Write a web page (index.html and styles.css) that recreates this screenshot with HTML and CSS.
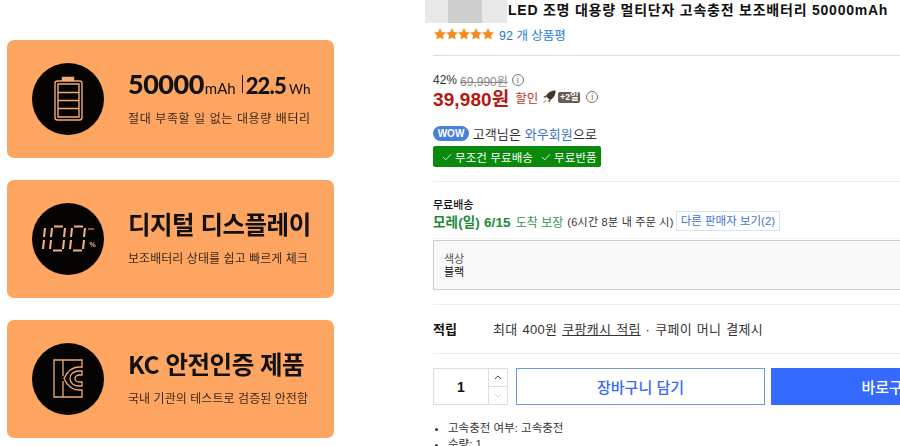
FILE: index.html
```html
<!DOCTYPE html>
<html lang="ko">
<head>
	<title>보조배터리</title>
	<meta charset="utf-8">
	<link rel="stylesheet" href="styles.css">
</head>
<body>

	<div class="page">

		<div class="features">

			<div class="card">
				<svg class="badge" viewBox="0 0 72 72">
					<circle cx="36" cy="36" r="36" fill="#050403"/>
					<g fill="none" stroke="#f0ac74" stroke-width="1.4">
						<path d="M30.500 18v-3.500h11V18" fill="#f0ac74"/>
						<rect x="23" y="18" width="27" height="39" rx="2.500"/>
						<path d="M26 21h21v33H26zM26 29.500h21M26 37.500h21M26 45.500h21"/>
					</g>
				</svg>
				<div class="card-text">
					<div class="headline headline-num">50000<small>mAh</small><span class="pipe"></span><span class="wh-num">22.5</span><small class="wh">Wh</small></div>
					<div class="sub sub-wide">절대 부족할 일 없는 대용량 배터리</div>
				</div>
			</div>

			<div class="card">
				<svg class="badge" viewBox="0 0 72 72">
					<circle cx="36" cy="36" r="36" fill="#050403"/>
					<g fill="none" stroke="#f3b07c" stroke-width="2.100">
						<path d="M13 25l-1 9M12 37l-1 9"/>
						<path d="M20 25l-1 9M19 37l-1 9M22 23.500h9M21 47.500h9M33 25l-1 9M32 37l-1 9"/>
						<path d="M40 25l-1 9M39 37l-1 9M42 23.500h9M41 47.500h9M53 25l-1 9M52 37l-1 9"/>
						<path d="M56 26h6" stroke-width="1"/>
					</g>
					<text class="percent" x="57.500" y="44">%</text>
				</svg>
				<div class="card-text">
					<div class="headline">디지털 디스플레이</div>
					<div class="sub">보조배터리 상태를 쉽고 빠르게 체크</div>
				</div>
			</div>

			<div class="card">
				<svg class="badge" viewBox="0 0 72 72">
					<circle cx="36" cy="36" r="36" fill="#050403"/>
					<g fill="none" stroke="#f0ac74" stroke-width="1.300">
						<path d="M22 17H50V24H47C40 24 35 29 32 35.500C35 42 40 47 47 47H50V54H22Z"/>
						<path d="M31 17V33M31 38V54"/>
						<path d="M50 28H47C42 28 38 31 38 35.500S42 43 47 43H50V39H47.500C45 39 43 37.500 43 35.500S45 32 47.500 32H50Z"/>
					</g>
				</svg>
				<div class="card-text">
					<div class="headline">KC 안전인증 제품</div>
					<div class="sub">국내 기관의 테스트로 검증된 안전함</div>
				</div>
			</div>

		</div>

		<div class="product">

			<div class="title-row">
				<div class="thumb"><span></span></div>
				<h1>LED 조명 대용량 멀티단자 고속충전 보조배터리 50000mAh</h1>
			</div>

			<div class="rating">
				<svg class="stars" viewBox="0 0 60 12">
					<defs>
						<path id="star" d="M6 0l1.800 3.900 4.200.5-3.100 2.900.8 4.200L6 9.400 2.300 11.500l.8-4.200L0 4.400l4.200-.5z"/>
					</defs>
					<use href="#star" fill="#f58a1f"/>
					<use href="#star" x="12" fill="#f58a1f"/>
					<use href="#star" x="24" fill="#f58a1f"/>
					<use href="#star" x="36" fill="#f58a1f"/>
					<use href="#star" x="48" fill="#f58a1f"/>
				</svg>
				<a class="reviews">92 개 상품평</a>
			</div>

			<div class="prices">
				<div class="price-old">
					42% <s>69,990원</s>
					<span class="info">i</span>
				</div>
				<div class="price-now">
					<strong>39,980원</strong>
					<span class="sale">할인</span>
					<svg class="rocket" viewBox="0 0 16 16">
						<path d="M15.500 .5c-5.500 0-9 2.500-11 6.500l4.500 4.500c4-2 6.500-5.500 6.500-11z" fill="#3d342c"/>
						<path d="M5 6L1.500 7.500l2.500 2zM10 11l-1.500 3.500-2-2.500z" fill="#6b5d50"/>
						<path d="M4 11L.5 15.500 5 13z" fill="#f09a30"/>
					</svg>
					<span class="plus">+2일</span>
					<span class="info">i</span>
				</div>
			</div>

			<div class="wow">
				<div class="wow-line"><span class="wow-pill">WOW</span> 고객님은 <a>와우회원</a>으로</div>
				<div class="free-tag">
					<svg class="check" viewBox="0 0 12 10"><path d="M1 5l3.500 3.500L11 1.500" fill="none" stroke="#fff" stroke-width="1"/></svg>
					<span>무조건 무료배송</span>
					<svg class="check" viewBox="0 0 12 10"><path d="M1 5l3.500 3.500L11 1.500" fill="none" stroke="#fff" stroke-width="1"/></svg>
					<span>무료반품</span>
				</div>
			</div>

			<div class="delivery">
				<div class="delivery-label">무료배송</div>
				<div class="delivery-line">
					<strong>모레(일) 6/15</strong>
					<span class="guarantee">도착 보장</span>
					<span class="until">(6시간 8분 내 주문 시)</span>
					<a class="sellers">다른 판매자 보기(2)</a>
				</div>
			</div>

			<div class="option">
				<div>색상</div>
				<div>블랙</div>
			</div>

			<div class="points">
				<strong>적립</strong>
				<span>최대 400원 <u>쿠팡캐시 적립</u> · 쿠페이 머니 결제시</span>
			</div>

			<div class="buy-row">
				<div class="qty">
					<div class="qty-value">1</div>
					<div class="qty-arrows">
						<button class="qty-btn"><svg viewBox="0 0 10 6"><path d="M1 5l4-4 4 4" fill="none" stroke="#333" stroke-width="1.100"/></svg></button>
						<button class="qty-btn"><svg viewBox="0 0 10 6"><path d="M1 1l4 4 4-4" fill="none" stroke="#ccc" stroke-width="1.100"/></svg></button>
					</div>
				</div>
				<button class="btn-cart">장바구니 담기</button>
				<button class="btn-buy">바로구매</button>
			</div>

			<ul class="attrs">
				<li>고속충전 여부: 고속충전</li>
				<li>수량: 1</li>
			</ul>

		</div>

	</div>

</body>
</html>
```

FILE: styles.css
```css
* {
	box-sizing: border-box;
}

html,
body {
	height: 446px;
	margin: 0;
	overflow: hidden;
}

body {
	background-color: #ffffff;
	color: #111111;
	font-family: "Liberation Sans", "Noto Sans CJK KR", sans-serif;
}

.page {
	display: flex;
	width: 900px;
}

/* left column, product detail picture */

.features {
	display: flex;
	flex: 0 0 425px;
	flex-direction: column;
	gap: 22px;
	padding: 40px 0 0 7px;
}

.card {
	align-items: center;
	background-color: #fea561;
	border-radius: 7px;
	display: flex;
	filter: blur(0.3px);
	height: 118px;
	padding-left: 25px;
	width: 327px;
}

.badge {
	flex: none;
	height: 72px;
	width: 72px;
}

.percent {
	fill: #f3b07c;
	font-family: "Liberation Sans", sans-serif;
	font-size: 7px;
	font-weight: bold;
}

.card-text {
	margin-left: 24px;
	padding-bottom: 6px;
}

.headline {
	font-family: "Noto Sans CJK KR", sans-serif;
	font-size: 24.5px;
	font-weight: 700;
	height: 37px;
	letter-spacing: -0.5px;
	line-height: 37px;
	white-space: nowrap;
}

.headline-num {
	align-items: baseline;
	display: flex;
	font-family: Lato, sans-serif;
	font-size: 27px;
	font-weight: 900;
	letter-spacing: -0.5px;
}

.headline-num small {
	font-size: 15px;
	font-weight: 400;
	letter-spacing: 0;
	margin-left: 1px;
}

.headline-num .wh {
	font-size: 13.5px;
	margin-left: 3px;
}

.wh-num {
	font-size: 22px;
	letter-spacing: -0.8px;
}

.pipe {
	align-self: center;
	background-color: #222222;
	height: 18px;
	margin: 0 3px 0 6px;
	width: 1px;
}

.sub {
	color: #3a2a1c;
	font-family: "Noto Sans CJK KR", sans-serif;
	font-size: 12px;
	letter-spacing: 0.05px;
	line-height: 18px;
	margin-top: 7px;
	white-space: nowrap;
}

.sub-wide {
	letter-spacing: 0.6px;
}

/* right column */

.product {
	flex: 1;
	min-width: 0;
	overflow: hidden;
	padding-left: 8px;
}

.title-row {
	display: flex;
	height: 23px;
	margin-left: -8px;
	white-space: nowrap;
}

.thumb {
	background-color: #e8e8e8;
	flex: 0 0 82px;
	padding-left: 23px;
}

.thumb span {
	background-color: #cfcfcf;
	display: block;
	height: 23px;
	width: 34px;
}

h1 {
	font-size: 14px;
	font-weight: 700;
	letter-spacing: 0.77px;
	line-height: 20px;
	margin: 0 0 0 1px;
}

.rating {
	align-items: center;
	border-bottom: 1px solid #dddddd;
	display: flex;
	height: 33px;
	padding-bottom: 10px;
}

.stars {
	height: 12px;
	margin-left: 1px;
	width: 60px;
}

.reviews {
	color: #2a7bd4;
	font-size: 12.5px;
	margin-left: 5px;
}

.prices {
	padding-top: 16px;
}

.price-old {
	align-items: center;
	color: #333333;
	display: flex;
	font-size: 12px;
	gap: 3px;
	height: 16px;
}

.price-old s {
	color: #888888;
}

.info {
	align-items: center;
	border: 1px solid #777777;
	border-radius: 50%;
	color: #666666;
	display: inline-flex;
	font-size: 9px;
	height: 12px;
	justify-content: center;
	margin-left: 1px;
	width: 12px;
}

.price-now {
	align-items: center;
	display: flex;
	height: 20px;
	margin-top: -1px;
}

.price-now strong {
	color: #b81710;
	font-size: 19px;
	letter-spacing: 0.1px;
}

.sale {
	color: #c0322c;
	font-size: 12.5px;
	margin-left: 6px;
}

.rocket {
	height: 14px;
	margin-left: 4px;
	width: 14px;
}

.plus {
	background-color: #6b5b55;
	border-radius: 2px;
	color: #ffffff;
	flex: none;
	font-size: 9px;
	font-weight: 700;
	height: 11px;
	line-height: 11px;
	margin: 0 5px 0 2px;
	text-align: center;
	white-space: nowrap;
	width: 22px;
}

.wow {
	border-bottom: 1px solid #eeeeee;
	height: 75px;
	padding-top: 17px;
}

.wow-line {
	align-items: center;
	color: #333333;
	display: flex;
	font-size: 13px;
	height: 18px;
	letter-spacing: 0.1px;
	white-space: pre;
}

.wow-line a {
	color: #3c72c8;
}

.wow-pill {
	background-color: #4a80dc;
	border-radius: 8px;
	color: #ffffff;
	font-size: 10px;
	font-weight: 700;
	height: 15px;
	letter-spacing: 0;
	line-height: 15px;
	text-align: center;
	width: 36px;
}

.free-tag {
	align-items: center;
	background-color: #0a8a0c;
	border-radius: 2px;
	color: #ffffff;
	display: flex;
	font-size: 11.5px;
	gap: 3px;
	height: 21px;
	letter-spacing: 0.1px;
	margin-top: 4px;
	padding-left: 7px;
	width: 168px;
}

.check {
	height: 8px;
	margin-left: 2px;
	width: 10px;
}

.check + span + .check {
	margin-left: 5px;
}

.delivery {
	border-bottom: 1px solid #f2f2f2;
	height: 57px;
	padding-top: 16px;
}

.delivery-label {
	font-size: 11px;
	font-weight: 500;
	line-height: 15px;
}

.delivery-line {
	align-items: center;
	color: #333333;
	display: flex;
	font-size: 11px;
	height: 20px;
	margin-top: -2px;
	white-space: nowrap;
}

.delivery-line strong {
	color: #1a8a38;
	font-size: 13.5px;
	letter-spacing: 0.15px;
}

.guarantee {
	color: #2e9a50;
	font-size: 12px;
	margin-left: 5px;
}

.until {
	letter-spacing: 0.25px;
	margin-left: 4px;
}

.sellers {
	border: 1px solid #d8e2f2;
	color: #3f74d0;
	font-size: 11.5px;
	height: 20px;
	line-height: 18px;
	margin-left: 2px;
	padding: 0 4px;
}

.option {
	background-color: #f8f8f8;
	border: 1px solid #cccccc;
	border-right: 0;
	font-size: 11px;
	height: 50px;
	line-height: 13px;
	margin-top: 1px;
	padding: 12px 10px;
}

.option div:first-child {
	color: #555555;
}

.points {
	align-items: center;
	border-bottom: 1px solid #eeeeee;
	border-top: 1px solid #eeeeee;
	display: flex;
	font-size: 13px;
	height: 50px;
	margin-top: 14px;
	padding-bottom: 2px;
}

.points strong {
	flex: 0 0 60px;
}

.points span {
	color: #333333;
	letter-spacing: 0.3px;
	white-space: pre;
	word-spacing: 1px;
}

.buy-row {
	display: flex;
	height: 37px;
	margin-top: 14px;
	width: 574px;
}

.qty {
	border: 1px solid #dddddd;
	display: flex;
	flex: 0 0 75px;
}

.qty-value {
	align-items: center;
	display: flex;
	flex: 1;
	font-size: 14px;
	font-weight: 700;
	justify-content: center;
}

.qty-arrows {
	border-left: 1px solid #dddddd;
	display: flex;
	flex: 0 0 19px;
	flex-direction: column;
}

.qty-btn {
	align-items: center;
	background-color: #ffffff;
	border: 0;
	display: flex;
	flex: 1;
	justify-content: center;
	padding: 0;
}

.qty-btn + .qty-btn {
	border-top: 1px solid #dddddd;
}

.qty-btn svg {
	height: 5px;
	width: 8px;
}

.btn-cart,
.btn-buy {
	font-family: "Liberation Sans", "Noto Sans CJK KR", sans-serif;
	font-size: 15px;
	font-weight: 500;
}

.btn-cart {
	background-color: #ffffff;
	border: 1px solid #6f97e8;
	color: #346aff;
	flex: 0 0 249px;
	margin-left: 8px;
}

.btn-buy {
	background-color: #346aff;
	border: 0;
	color: #ffffff;
	flex: 0 0 236px;
	margin-left: 6px;
}

.attrs {
	color: #333333;
	font-size: 11.5px;
	line-height: 16px;
	margin: 15px 0 0;
	padding-left: 15px;
}
```
